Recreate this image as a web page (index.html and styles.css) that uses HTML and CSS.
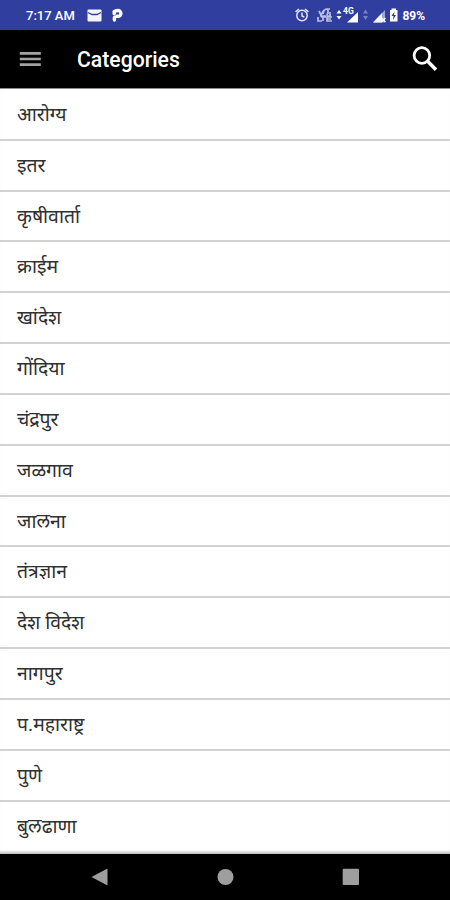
FILE: index.html
```html
<!DOCTYPE html>
<html lang="mr">
<head>
<meta charset="UTF-8">
<meta name="viewport" content="width=device-width, initial-scale=1.0">
<title>Categories</title>
<link rel="stylesheet" href="styles.css">
</head>
<body>
  <div class="status-bar">
    <span class="time">7:17 AM</span>
    <svg class="mail" width="15" height="13" viewBox="0 0 15 13">
      <rect x="0.5" y="0.5" width="14" height="12" rx="1" fill="#f4f5fb"/>
      <path d="M1 3.5L5 5.5H10L14 3.5" fill="none" stroke="#303f9f" stroke-width="1.3"/>
    </svg>
    <svg class="p-icon" width="12" height="14" viewBox="0 0 12 14">
      <path d="M2.4 12V9.5M2.2 5.8V3.6Q3.5 2.5 6 2.5A2.9 2.9 0 0 1 6 8.3H4.8" fill="none" stroke="#fff" stroke-width="3.4" stroke-linecap="round"/>
    </svg>
    <div class="status-right">
      <svg width="147" height="20" viewBox="0 0 147 20">
        <!-- alarm -->
        <g fill="none" stroke="#e3e6f5" stroke-width="1.5">
          <circle cx="12" cy="10.5" r="5.2"/>
          <path d="M12 7.5V11L14.3 12M5.6 6.8L9 4M18.4 6.8L15 4"/>
        </g>
        <!-- VoLTE -->
        <g fill="none" stroke="#b9c0e2" stroke-width="1.7">
          <path d="M29 6L31 10L34 5M33 9Q34 4 37 4Q39 5 37 10M36 4H40M38 4V9M28 12V16H32M33 12V16M31 12H36M37 12V16H42M37 12H42M37 14H41M30 11H41M40 7V11"/>
        </g>
        <path d="M46.5 8.5L49 5L51.5 8.5ZM46.5 11L49 14.5L51.5 11Z" fill="#fff"/>
        <text class="net" x="53" y="9.3">4G</text>
        <path d="M57 17.5L68 7V17.5Z" fill="#fff"/>
        <path d="M73 8.5L75.5 4.5L78 8.5ZM73 11L75.5 15L78 11Z" fill="#7782c3"/>
        <path d="M83 17.5L95 5V17.5Z" fill="#9fa8d6"/>
        <path d="M83 17.5L92 8V17.5Z" fill="#f4f5fb"/>
        <path d="M91.5 13L95.5 17M95.5 13L91.5 17" stroke="#fff" stroke-width="1.3"/>
        <!-- battery -->
        <path d="M101.5 3.5H106V5H107.5V16.5H100V5H101.5Z" fill="#fff"/>
        <path d="M104.5 6.5L101.5 11H103.5L103 15L106 10H104Z" fill="#303f9f"/>
        <text class="battery" x="112.5" y="14.5" textLength="22.5">89%</text>
      </svg>
    </div>
  </div>

  <div class="toolbar">
    <svg class="menu" width="22" height="16" viewBox="0 0 22 16">
      <path d="M0.8 2.4H21.8M0.8 8H21.8M0.8 13.6H21.8" stroke="#a3a3a3" stroke-width="2.6"/>
    </svg>
    <h1>Categories</h1>
    <svg class="search" width="26" height="26" viewBox="0 0 26 26">
      <circle cx="9.9" cy="9.5" r="7.8" fill="none" stroke="#fff" stroke-width="2.8"/>
      <path d="M15.4 15L24 23.8" stroke="#fff" stroke-width="3.5"/>
    </svg>
  </div>

  <ul class="category-list">
    <li>आरोग्य</li>
    <li>इतर</li>
    <li>कृषीवार्ता</li>
    <li>क्राईम</li>
    <li>खांदेश</li>
    <li>गोंदिया</li>
    <li>चंद्रपुर</li>
    <li>जळगाव</li>
    <li>जालना</li>
    <li>तंत्रज्ञान</li>
    <li>देश विदेश</li>
    <li>नागपुर</li>
    <li>प.महाराष्ट्र</li>
    <li>पुणे</li>
    <li>बुलढाणा</li>
  </ul>

  <div class="nav-bar">
    <svg width="18" height="20" viewBox="0 0 18 20"><path d="M0.5 10L16.5 1.5V18.5Z" fill="#9e9e9e"/></svg>
    <svg width="18" height="20" viewBox="0 0 18 20"><circle cx="8.5" cy="10" r="8" fill="#9e9e9e"/></svg>
    <svg width="18" height="20" viewBox="0 0 18 20"><rect x="0.7" y="1.8" width="16.3" height="16.3" rx="1" fill="#9e9e9e"/></svg>
  </div>
</body>
</html>
```
FILE: styles.css
```css
* {
  box-sizing: border-box;
}

body {
  margin: 0;
  height: 900px;
  overflow: hidden;
  display: flex;
  flex-direction: column;
  background-color: #ffffff;
  font-family: Roboto, "Noto Sans", sans-serif;
}

.status-bar {
  height: 30px;
  flex: none;
  display: flex;
  align-items: center;
  padding-left: 26px;
  background-color: #303f9f;
  color: #ffffff;
}

.time {
  width: 61px;
  font-size: 13px;
  font-weight: 500;
  white-space: nowrap;
}

.p-icon {
  margin-left: 10px;
}

.status-right {
  margin-left: auto;
  width: 160px;
  height: 20px;
}

.net {
  font-size: 8.5px;
  font-weight: 700;
  fill: #ffffff;
}

.battery {
  font-size: 12px;
  font-weight: 700;
  fill: #ffffff;
}

.toolbar {
  height: 59px;
  flex: none;
  display: flex;
  align-items: center;
  padding: 0 12px 0 19px;
  background-color: #000000;
  border-bottom: 1px solid #8c8c8c;
}

.toolbar h1 {
  margin: 2px 0 0 36px;
  font-size: 21.2px;
  font-weight: 500;
  line-height: 28px;
  color: #ffffff;
}

.search {
  margin-left: auto;
}

.category-list {
  flex: 1;
  margin: 0;
  padding: 1px 0 0;
  list-style: none;
  box-shadow: inset 0 -4px 3px -2px #bdbdbd;
}

.category-list li {
  height: 50.83px;
  padding-left: 17px;
  border-bottom: 2px solid #d2d2d2;
  font-size: 19.4px;
  line-height: 50px;
  color: #303030;
  white-space: nowrap;
}

.category-list li:last-child {
  border-bottom: none;
}

.nav-bar {
  height: 46px;
  flex: none;
  display: flex;
  align-items: center;
  justify-content: space-between;
  padding: 0 90px 0 91px;
  background-color: #000000;
}
```
